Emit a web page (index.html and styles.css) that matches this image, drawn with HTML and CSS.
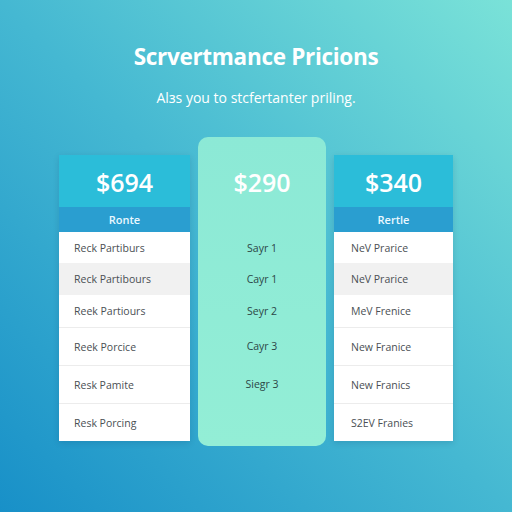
FILE: index.html
```html
<!DOCTYPE html>
<html>
<head>
<meta charset="utf-8">
<link rel="stylesheet" href="styles.css">
</head>
<body>
<div class="page">
  <h1 class="title">Scrvertmance Pricions</h1>
  <p class="subtitle">Alɜs you to stcfertanter priling.</p>
  <div class="plans">
    <div class="card side left">
      <div class="price">$694</div>
      <div class="band">Ronte</div>
      <div class="row r1">Reck Partiburs</div>
      <div class="row r2 alt">Reck Partibours</div>
      <div class="row r3">Reek Partiours</div>
      <div class="row r4 line">Reek Porcice</div>
      <div class="row r5 line">Resk Pamite</div>
      <div class="row r6 line">Resk Porcing</div>
    </div>
    <div class="card mid">
      <div class="price">$290</div>
      <div class="band empty"></div>
      <div class="row r1">Sayr 1</div>
      <div class="row r2">Cayr 1</div>
      <div class="row r3">Seyr 2</div>
      <div class="row r4">Cayr 3</div>
      <div class="row r5">Siegr 3</div>
    </div>
    <div class="card side right">
      <div class="price">$340</div>
      <div class="band">Rertle</div>
      <div class="row r1">NeV Prarice</div>
      <div class="row r2 alt">NeV Prarice</div>
      <div class="row r3">MeV Frenice</div>
      <div class="row r4 line">New Franice</div>
      <div class="row r5 line">New Franics</div>
      <div class="row r6 line">S2EV Franies</div>
    </div>
  </div>
</div>
</body>
</html>
```

FILE: styles.css
```css
html, body {
  margin: 0;
  padding: 0;
}
body {
  width: 512px;
  height: 512px;
  overflow: hidden;
  background: linear-gradient(45deg, #1890c8 0%, #45b8d2 50%, #7ae2d8 100%);
  font-family: "Open Sans", "Noto Sans", sans-serif;
}
.page {
  display: flex;
  flex-direction: column;
  align-items: center;
}
.title {
  margin: 41px 0 0;
  height: 32px;
  line-height: 32px;
  font-size: 22.5px;
  font-weight: 700;
  color: #ffffff;
  letter-spacing: -0.3px;
}
.subtitle {
  margin: 15px 0 0;
  height: 20px;
  line-height: 20px;
  font-size: 14px;
  color: #ffffff;
}
.plans {
  margin-top: 29px;
  display: flex;
  align-items: flex-start;
  gap: 8px;
}
.card {
  display: flex;
  flex-direction: column;
}
.side {
  margin-top: 18px;
  background: #ffffff;
  box-shadow: 0 2px 6px rgba(0, 40, 80, 0.15);
}
.left { width: 131px; }
.right { width: 119px; }
.mid {
  width: 128px;
  height: 309px;
  padding-top: 18px;
  box-sizing: border-box;
  border-radius: 10px;
  background: linear-gradient(180deg, #8ce9d6, #93eed6);
}
.price {
  height: 52px;
  line-height: 54px;
  text-align: center;
  font-size: 25px;
  font-weight: 600;
  color: #ffffff;
}
.side .price {
  background: #2bbdd9;
}
.band {
  height: 25px;
  line-height: 25px;
  text-align: center;
  font-size: 11px;
  font-weight: 600;
  color: #eaf8ff;
  background: #2a9ed0;
}
.band.empty {
  background: transparent;
}
.row {
  font-size: 10.5px;
  color: #4a4f54;
  display: flex;
  align-items: center;
  box-sizing: border-box;
}
.left .row { padding-left: 15px; }
.right .row { padding-left: 17px; }
.mid .row {
  justify-content: center;
  color: #2c4646;
}
.r1 { height: 31px; }
.r2 { height: 32px; }
.r3 { height: 32px; }
.r4 { height: 38px; }
.r5 { height: 38px; }
.r6 { height: 38px; }
.alt { background: #f1f1f1; }
.line { border-top: 1px solid #ececec; }
```
